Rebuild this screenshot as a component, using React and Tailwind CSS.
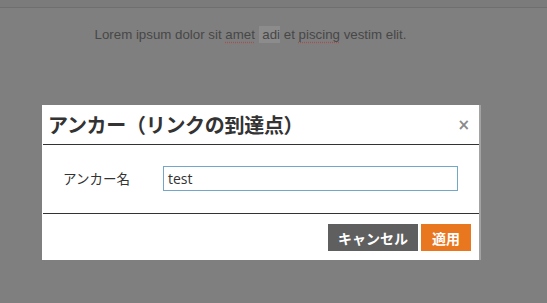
export default function App() {
  return (
    <div className="relative w-[547px] h-[303px] overflow-hidden bg-[#7f7f7f]">
      <div className="h-[8px] border-b border-[#6f6f6f] bg-[#7b7b7b]" />
      <p
        className="pt-[18px] pr-[46px] text-center text-[13.3px] leading-[18px] text-[#474747]"
        style={{ fontFamily: '"Liberation Sans", Arial, sans-serif' }}
      >
        Lorem ipsum dolor sit{" "}
        <span className="underline decoration-dotted decoration-[#a45050] underline-offset-[3px]">amet</span>{" "}
        <span className="bg-[#8c8c8c] py-[1px]">&nbsp;adi</span> et{" "}
        <span className="underline decoration-dotted decoration-[#a45050] underline-offset-[3px]">piscing</span>{" "}
        vestim elit.
      </p>

      <div
        className="absolute left-[42px] top-[105px] w-[437px] h-[155px] bg-white flex flex-col shadow-[2px_0_0_#a3a3a3]"
        style={{ fontFamily: '"Noto Sans", "Noto Sans CJK JP", sans-serif' }}
      >
        <div className="h-[40px] flex items-center justify-between pl-[5px] pr-[9px] border-b border-[#333] ml-[1px]">
          <span
            className="text-[20px] font-bold text-[#333] leading-none tracking-[-0.3px]"
            style={{ fontFamily: '"Noto Sans CJK JP", sans-serif' }}
          >
            アンカー（リンクの到達点）
          </span>
          <span
            className="text-[15px] font-bold text-[#8a8a8a] leading-none pt-[1px]"
            style={{ fontFamily: '"DejaVu Sans", sans-serif' }}
          >
            ×
          </span>
        </div>
        <div className="h-[69px] flex items-center border-b border-[#333] ml-[1px] pb-[2px]">
          <label
            className="w-[120px] pl-[20px] text-[13.5px] text-[#333]"
            style={{ fontFamily: '"Noto Sans CJK JP", sans-serif' }}
          >
            アンカー名
          </label>
          <div className="w-[295px] h-[25px] border border-[#73a7c8] flex items-center pl-[4px] text-[14px] text-[#333]"
            style={{ fontFamily: '"Open Sans", sans-serif' }}
          >
            test
          </div>
        </div>
        <div className="flex-1 flex justify-end items-start pt-[10px] pr-[8px] gap-[3px]">
          <button
            className="w-[90px] h-[27px] bg-[#5f5f5f] text-white text-[14px] font-bold leading-none"
            style={{ fontFamily: '"Noto Sans CJK JP", sans-serif' }}
          >
            キャンセル
          </button>
          <button
            className="w-[50px] h-[27px] bg-[#e8771f] text-white text-[14px] font-bold leading-none"
            style={{ fontFamily: '"Noto Sans CJK JP", sans-serif' }}
          >
            適用
          </button>
        </div>
      </div>
    </div>
  );
}
